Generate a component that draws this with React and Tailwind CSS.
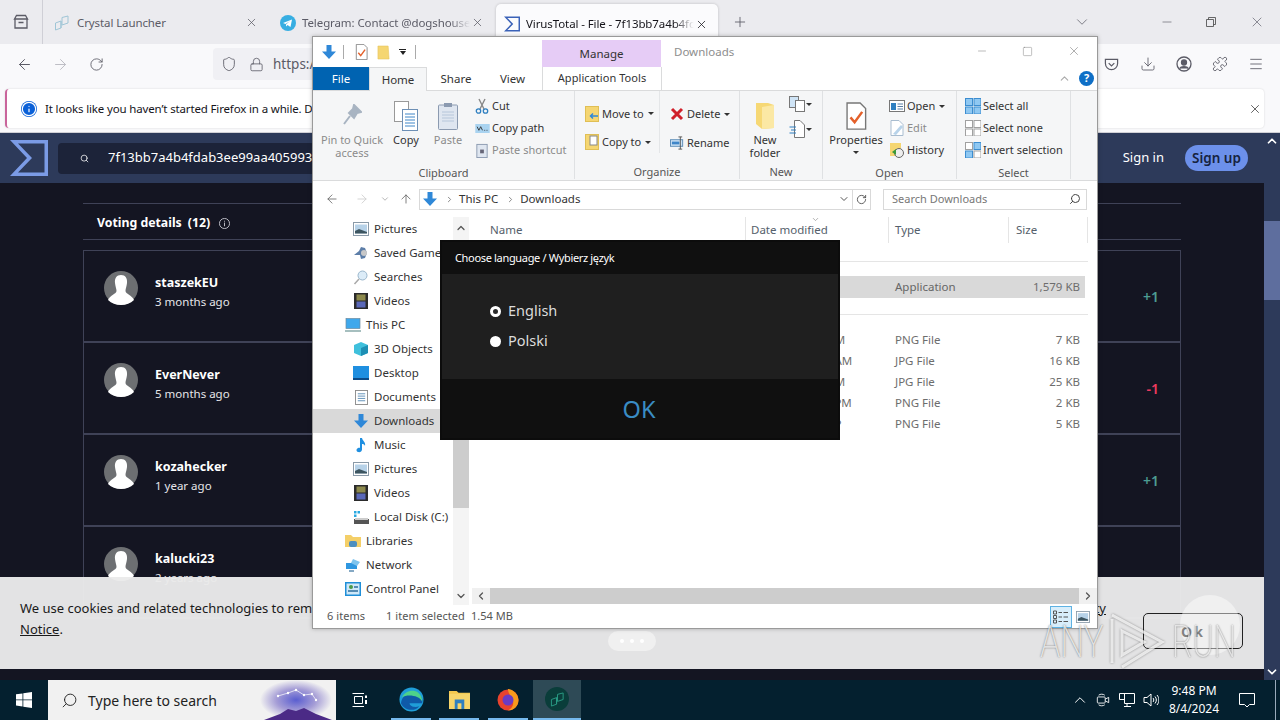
import React from "react";
import { X, Plus, ChevronDown, ChevronUp, ChevronLeft, ChevronRight, Minus, Square, ArrowLeft, ArrowRight, ArrowUp, RotateCw, Shield, Lock, Download, Puzzle, Menu, Search, Info } from "lucide-react";

const Sigma = ({ className, color = "#7b9be6" }) => (
  <svg viewBox="0 0 38 36" className={className}>
    <path fillRule="evenodd" fill={color} d="M0 0H38V36H0L17 18ZM8 3.500L22 18L8 32.500H34.500V3.500Z" />
  </svg>
);

const Crystal = ({ className, c = "#9fc5d6" }) => (
  <svg viewBox="0 0 16 16" className={className} fill="none" stroke={c} strokeWidth="1">
    <path d="M1.500 8L7 6V13L1.500 15ZM7 6V13M8 2.500L14 1V8L8 10Z" />
  </svg>
);

const DownArrow = ({ className }) => (
  <svg viewBox="0 0 16 16" className={className}><path d="M5.500 1H10.500V7.500H15L8 15L1 7.500H5.500Z" fill="#2f88d8" /></svg>
);
const Doc = ({ className, check }) => (
  <svg viewBox="0 0 16 20" className={className} fill="none">
    <path d="M1.500 .5H11L15 4.500V19.500H1.500Z" fill="#fff" stroke="#777" />
    {check && <path d="M4 11L7 14.500L12.500 7" stroke="#e4602a" strokeWidth="1.800" />}
  </svg>
);
const Pic = ({ className }) => (
  <svg viewBox="0 0 16 14" className={className}>
    <rect x=".5" y=".5" width="15" height="13" fill="#fff" stroke="#8a9aa8" />
    <rect x="2" y="2.500" width="12" height="9" fill="#b7d2e8" />
    <path d="M2 9L6 7L14 10V11.500H2Z" fill="#3d5560" />
  </svg>
);
const Vid = ({ className }) => (
  <svg viewBox="0 0 14 16" className={className}>
    <rect width="14" height="16" fill="#2b2b2b" />
    <rect x="2.500" y="1.500" width="9" height="6" fill="#8d8a4d" />
    <rect x="2.500" y="8.500" width="9" height="6" fill="#5a68b8" />
  </svg>
);

const SmallBtn = ({ icon, label, gray, caret, cls = "" }) => (
  <div className={`flex items-center h-[22px] ${cls}`}>
    <span className="w-[18px] h-[16px] flex items-center justify-center shrink-0">{icon}</span>
    <span className={`ml-[1px] whitespace-nowrap ${gray ? "text-[#8b8b8b]" : "text-[#333]"}`}>{label}</span>
    {caret && <span className="ml-[4px] w-0 h-0 border-x-[3px] border-x-transparent border-t-[3px] border-t-[#333]" />}
  </div>
);

const BigBtn = ({ icon, lines, gray, w, caret }) => (
  <div className={`flex flex-col items-center shrink-0 ${w}`}>
    <div className="h-[34px] mt-[8px] flex items-center justify-center">{icon}</div>
    <div className={`leading-[13px] text-center whitespace-nowrap ${gray ? "text-[#8b8b8b]" : "text-[#333]"}`}>
      {lines.map((l) => (<div key={l}>{l}</div>))}
      {caret && <div className="mx-auto mt-[5px] w-0 h-0 border-x-[3px] border-x-transparent border-t-[3px] border-t-[#333]" />}
    </div>
  </div>
);

const Group = ({ w, label, children }) => (
  <div className={`${w} shrink-0 flex flex-col border-r border-[#dfe1e3] h-[88px]`}>
    <div className="h-[70px] flex">{children}</div>
    <div className="text-center text-[#555] leading-[14px] mt-[5px]">{label}</div>
  </div>
);

const SelIcon = ({ fill }) => (
  <svg viewBox="0 0 16 16" className="w-[16px] h-[16px]">
    {[[0, 0], [8.500, 0], [0, 8.500], [8.500, 8.500]].map(([x, y], i) => (
      <rect key={i} x={x + .5} y={y + .5} width="7" height="7" fill={fill[i] ? "#8fc8f2" : "#fff"} stroke={fill[i] ? "#3c8dd0" : "#a0a0a0"} />
    ))}
  </svg>
);

const navRows = [
  ["Pictures", <Pic className="w-[16px] h-[14px]" />, 1],
  ["Saved Game", <svg viewBox="0 0 16 16" className="w-[16px] h-[16px]"><path d="M1 10L6 6L8 2L12 3L14 8L12 13L8 14L7 10Z" fill="#5d7ea8" /><circle cx="11" cy="8" r="3" fill="#c8c8c8" /></svg>, 1],
  ["Searches", <svg viewBox="0 0 16 16" className="w-[16px] h-[16px]" fill="none"><circle cx="9.500" cy="6.500" r="4.500" fill="#dcecf8" stroke="#9ab6cc" /><path d="M6 10L1.500 15" stroke="#a8a8a8" strokeWidth="1.500" /></svg>, 1],
  ["Videos", <Vid className="w-[14px] h-[16px]" />, 1],
  ["This PC", <svg viewBox="0 0 16 16" className="w-[16px] h-[16px]"><rect x="1" y="1.500" width="14" height="10" fill="#3fa8ec" stroke="#6b8aa0" strokeWidth=".7" /><path d="M0 14H16" stroke="#8aa" strokeWidth="1.500" /></svg>, 0],
  ["3D Objects", <svg viewBox="0 0 16 16" className="w-[16px] h-[16px]"><path d="M8 1L15 4V12L8 15L1 12V4Z" fill="#3fc0dc" /><path d="M8 7L15 4V12L8 15Z" fill="#1d8fb4" /></svg>, 1],
  ["Desktop", <svg viewBox="0 0 16 14" className="w-[16px] h-[14px]"><rect width="16" height="14" fill="#1f8fe0" /><rect y="12" width="16" height="2" fill="#0c4a86" /></svg>, 1],
  ["Documents", <svg viewBox="0 0 14 16" className="w-[13px] h-[15px]"><rect x=".5" y=".5" width="13" height="15" fill="#fff" stroke="#8a8a8a" /><path d="M3 4H11M3 6.500H11M3 9H11M3 11.500H11" stroke="#5b8db5" /></svg>, 1],
  ["Downloads", <DownArrow className="w-[16px] h-[16px]" />, 1, true],
  ["Music", <svg viewBox="0 0 16 16" className="w-[16px] h-[16px]"><path d="M7 1H9C9.500 4 13 5 12 9C11.500 7.500 10.500 7 9 7V12.500C9 14.500 7 15.500 5 15C3 14.500 3 12 5 11C6 10.500 7 10.700 7 11Z" fill="#1f8fe0" /></svg>, 1],
  ["Pictures", <Pic className="w-[16px] h-[14px]" />, 1],
  ["Videos", <Vid className="w-[14px] h-[16px]" />, 1],
  ["Local Disk (C:)", <svg viewBox="0 0 16 16" className="w-[16px] h-[16px]"><rect x="1" y="2" width="2.500" height="2.500" fill="#29a8e0" /><rect x="4.500" y="2" width="2.500" height="2.500" fill="#29a8e0" /><rect x="1" y="5.500" width="2.500" height="2.500" fill="#29a8e0" /><rect x="1" y="10" width="15" height="5" fill="#555" /><rect x="2" y="9" width="13" height="2" fill="#ccc" /></svg>, 1],
  ["Libraries", <svg viewBox="0 0 16 16" className="w-[16px] h-[16px]"><path d="M0 2H6L8 4H16V14H0Z" fill="#f4cf68" /><rect x="4" y="8" width="8" height="6" rx="2" fill="#4d8fc0" /></svg>, 0],
  ["Network", <svg viewBox="0 0 16 16" className="w-[16px] h-[16px]"><path d="M1 6H12V12H1Z" fill="#2f97e0" /><path d="M8 2L15 5L12 9L6 6Z" fill="#7ec4ee" /><path d="M4 14H9" stroke="#5c8db0" strokeWidth="1.500" /></svg>, 0],
  ["Control Panel", <svg viewBox="0 0 16 14" className="w-[16px] h-[14px]"><rect width="16" height="14" fill="#1f8fd8" /><rect x="1.500" y="1.500" width="13" height="11" fill="#cfe8f8" /><circle cx="6" cy="5" r="2" fill="#4a9a4a" /><path d="M9 5H13M3 9H13" stroke="#2e6d9c" strokeWidth="1.300" /></svg>, 0],
];

const files = [
  ["8/1/2024 4:10 PM", "PNG File", "7 KB"],
  ["7/3/2024 11:16 AM", "JPG File", "16 KB"],
  ["7/3/2024 1:22 PM", "JPG File", "25 KB"],
  ["7/3/2024 12:47 PM", "PNG File", "2 KB"],
  ["7/3/2024 12:14 P", "PNG File", "5 KB"],
];

const voters = [
  ["staszekEU", "3 months ago", "+1", "text-[#4d9d92]"],
  ["EverNever", "5 months ago", "-1", "text-[#ee3a5e]"],
  ["kozahecker", "1 year ago", "+1", "text-[#4d9d92]"],
  ["kalucki23", "2 years ago", "", ""],
];

const Avatar = () => (
  <svg viewBox="0 0 34 34" className="w-[34px] h-[34px] shrink-0">
    <circle cx="17" cy="17" r="17" fill="#6d6f72" />
    <path d="M17 4C21.500 4 23.500 7.500 23 12C22.700 15 21.500 18 21.500 20C21.500 23 28 24 30 29C26.500 32.500 22 34 17 34C12 34 7.500 32.500 4 29C6 24 12.500 23 12.500 20C12.500 18 11.300 15 11 12C10.500 7.500 12.500 4 17 4Z" fill="#fff" />
  </svg>
);

function Tabs() {
  return (
    <div className="h-[44px] bg-[#ebebef] flex items-center text-[11.500px] tracking-[-0.1px] text-[#5b5b66] shrink-0">
      <div className="w-[43px] h-full flex items-center justify-center border-r border-[#cfcfd6] shrink-0">
        <svg viewBox="0 0 16 16" className="w-[16px] h-[16px]" fill="none" stroke="#5b5b66" strokeWidth="1.300">
          <path d="M2 5V14H14V5M1.500 5L3.500 1.500H12.500L14.500 5ZM5.500 8.500H10.500" />
        </svg>
      </div>
      <div className="w-[222px] flex items-center pl-[11px] pr-[7px] pt-[1px] shrink-0">
        <Crystal className="w-[16px] h-[16px] shrink-0" />
        <span className="ml-[7px] flex-1 whitespace-nowrap">Crystal Launcher</span>
        <X size={13} strokeWidth={1.400} />
      </div>
      <div className="w-[231px] flex items-center pl-[15px] pr-[12px] pt-[1px] shrink-0">
        <svg viewBox="0 0 16 16" className="w-[16px] h-[16px] shrink-0"><circle cx="8" cy="8" r="8" fill="#37aee2" /><path d="M3 8L12 4.500L10.500 12L7.500 10L6 11.500L6 9.500L10 6L5.500 9Z" fill="#fff" /></svg>
        <span className="ml-[6px] w-[168px] overflow-hidden whitespace-nowrap [mask-image:linear-gradient(to_right,black_88%,transparent)]">Telegram: Contact @dogshouse_bot</span>
        <X size={13} strokeWidth={1.400} className="ml-[1px]" />
      </div>
      <div className="w-[222px] h-[40px] mt-[4px] bg-[#fbfbfd] rounded-t-[5px] shadow-[0_0_3px_rgba(0,0,0,0.2)] flex items-center pl-[8px] pr-[9px] shrink-0 text-[#15141a]">
        <Sigma className="w-[16px] h-[16px] shrink-0" color="#3b62b8" />
        <span className="ml-[6px] w-[168px] overflow-hidden whitespace-nowrap [mask-image:linear-gradient(to_right,black_88%,transparent)]">VirusTotal - File - 7f13bb7a4b4fdab3ee99</span>
        <X size={13} strokeWidth={1.400} className="ml-[1px]" />
      </div>
      <Plus size={16} strokeWidth={1.300} className="ml-[14px] shrink-0" />
      <div className="flex-1" />
      <ChevronDown size={18} strokeWidth={1} className="mr-[69px]" />
      <Minus size={14} strokeWidth={1.100} className="mr-[32px]" />
      <svg viewBox="0 0 10 10" className="w-[10px] h-[10px] mr-[33px]" fill="none" stroke="#444" strokeWidth=".8"><path d="M.5 2.500H7.500V9.500H.5ZM2.500 2.500V.5H9.500V7.500H7.500" /></svg>
      <X size={16} strokeWidth={1} className="mr-[15px]" />
    </div>
  );
}

function NavBar() {
  return (
    <div className="h-[45px] bg-[#f9f9fb] flex items-center pb-[5px] shrink-0 text-[#5b5b66]">
      <ArrowLeft size={17} strokeWidth={1.400} className="ml-[16px]" />
      <ArrowRight size={17} strokeWidth={1.400} className="ml-[19px] text-[#bdbdc4]" />
      <RotateCw size={15} strokeWidth={1.400} className="ml-[20px]" />
      <div className="ml-[109px] h-[32px] w-[880px] bg-[#f0f0f4] rounded-[4px] flex items-center pl-[8px] text-[13.500px]">
        <Shield size={16} strokeWidth={1.300} />
        <Lock size={15} strokeWidth={1.300} className="ml-[12px]" />
        <span className="ml-[9px]">https://</span>
      </div>
      <div className="flex-1" />
      <svg viewBox="0 0 16 16" className="w-[15px] h-[15px] mr-[21px]" fill="none" stroke="#5b5b66" strokeWidth="1.300"><path d="M1.500 2.500H14.500V7A6.500 6.500 0 0 1 1.500 7ZM5 6.500L8 9.500L11 6.500" /></svg>
      <Download size={16} strokeWidth={1.300} className="mr-[20px]" />
      <svg viewBox="0 0 16 16" className="w-[16px] h-[16px] mr-[20px]" fill="none" stroke="#5b5b66" strokeWidth="1.300"><circle cx="8" cy="8" r="7" /><circle cx="8" cy="6.500" r="2.500" fill="#5b5b66" /><path d="M3.500 12.500C5 10 11 10 12.500 12.500" fill="#5b5b66" /></svg>
      <Puzzle size={16} strokeWidth={1.300} className="mr-[20px]" />
      <Menu size={16} strokeWidth={1.300} className="mr-[16px]" />
    </div>
  );
}

function InfoBar() {
  return (
    <div className="h-[44px] bg-[#f9f9fb] shrink-0 pl-[5px] pr-[16px] border-b border-[#d0d0d6]">
      <div className="h-[39px] bg-white rounded-[4px] shadow-[0_0_2px_rgba(0,0,0,0.15)] border-l-[2px] border-[#c9649b] flex items-center pl-[14px] pr-[1px] pt-[1px] text-[11.500px] tracking-[-0.15px] text-[#15141a]">
        <span className="w-[16px] h-[16px] rounded-full bg-[#0a60d8] text-white flex items-center justify-center shrink-0">
          <Info size={16} strokeWidth={1.800} color="#fff" />
        </span>
        <span className="ml-[8px] flex-1 whitespace-nowrap">It looks like you haven’t started Firefox in a while. Do you want to clean it up for a fresh</span>
        <X size={14} strokeWidth={1.300} className="text-[#333] mr-[1px]" />
      </div>
    </div>
  );
}

function VtHeader() {
  return (
    <div className="h-[50px] bg-[#2d3a5a] flex items-center shrink-0 text-white">
      <Sigma className="w-[38px] h-[36px] ml-[10px] shrink-0" />
      <div className="ml-[10px] w-[520px] h-[31px] bg-[#1c2339] rounded-[4px] flex items-center pl-[22px] text-[13px] overflow-hidden whitespace-nowrap">
        <Search size={9} strokeWidth={2} className="shrink-0" />
        <span className="ml-[19px]">7f13bb7a4b4fdab3ee99aa40599314a91b1c8e3d2a</span>
      </div>
      <div className="flex-1" />
      <span className="text-[13px] mr-[21px]">Sign in</span>
      <span className="mr-[32px] w-[63px] h-[26px] rounded-full bg-[#6c90ea] text-[#16233f] font-semibold text-[13.500px] flex items-center justify-center">Sign up</span>
    </div>
  );
}

function Voting() {
  return (
    <div className="bg-[#141522] flex-1 overflow-hidden pl-[83px] pr-[83px] pt-[20px] text-white">
      <div className="w-[1098px] h-[37px] border-y border-[#3f4257] flex items-center pl-[14px] pt-[3px] text-[12.300px] font-bold">
        Voting details <span className="ml-[6px]">(12)</span>
        <svg viewBox="0 0 12 12" className="w-[11px] h-[11px] ml-[9px]" fill="none" stroke="#c8c8d0"><circle cx="6" cy="6" r="5.500" /><path d="M6 5V9M6 3V4" /></svg>
      </div>
      <div className="w-[1098px] mt-[10px] border-t border-x border-[#3f4257]">
        {voters.map(([n, t, v, c]) => (
          <div key={n} className="h-[92px] border-b-2 border-[#3f4257] flex pl-[20px] pr-[21px] pt-[20px]">
            <Avatar />
            <div className="ml-[17px] mt-[2px]">
              <div className="text-[12.500px] font-bold leading-[20px]">{n}</div>
              <div className="text-[11.500px] leading-[18px] text-[#e6e6ea]">{t}</div>
            </div>
            <div className={`ml-auto mt-[15px] text-[14px] font-semibold ${c}`}>{v}</div>
          </div>
        ))}
      </div>
    </div>
  );
}

function Cookie() {
  return (
    <div className="absolute left-0 top-[577px] w-[1264px] h-[92px] bg-[#eaeaea]/[0.97] pl-[20px] pt-[21px] text-[13px] text-[#1a1a1a] leading-[21px]">
      <div className="w-[1086px] flex justify-between whitespace-nowrap">
        <span>We use cookies and related technologies to remember your preferences. See our</span>
        <span className="underline">Privacy</span>
      </div>
      <div><span className="underline">Notice</span>.</div>
      <div className="absolute left-[1143px] top-[36px] w-[100px] h-[36px] rounded-[5px] border border-[#222] flex items-center justify-center text-[14px] font-bold tracking-[2px]">Ok</div>
      <div className="absolute left-[608px] top-[54px] w-[48px] h-[20px] rounded-full bg-[#f0f0f0] flex items-center justify-center gap-[6px]">
        <i className="w-[4px] h-[4px] rounded-full bg-white" /><i className="w-[4px] h-[4px] rounded-full bg-white" /><i className="w-[4px] h-[4px] rounded-full bg-white" />
      </div>
    </div>
  );
}

function Explorer() {
  return (
    <div className="absolute left-[312px] top-[36px] w-[786px] h-[593px] bg-white border border-[#9a9a9a] flex flex-col text-[11.500px] text-[#333] shadow-[0_0_4px_rgba(0,0,0,0.25)]">
      {/* title row */}
      <div className="h-[30px] flex items-end shrink-0">
        <div className="w-[229px] h-[30px] flex items-center pl-[8px] shrink-0">
          <DownArrow className="w-[16px] h-[16px]" />
          <i className="ml-[6px] w-px h-[14px] bg-[#aaa]" />
          <Doc check className="ml-[11px] w-[13px] h-[16px]" />
          <svg viewBox="0 0 14 16" className="ml-[9px] w-[13px] h-[15px]"><path d="M1 1H12L13 15H1Z" fill="#f5d672" stroke="#e6c45c" strokeWidth=".6" /></svg>
          <span className="ml-[9px] flex flex-col items-center gap-[1px]">
            <i className="w-[7px] h-px bg-[#222]" />
            <i className="w-0 h-0 border-x-[3.500px] border-x-transparent border-t-[4px] border-t-[#222]" />
          </span>
          <i className="ml-[9px] w-px h-[14px] bg-[#aaa]" />
        </div>
        <div className="w-[119px] h-[27px] bg-[#e6ccf6] flex items-center justify-center shrink-0">Manage</div>
        <span className="ml-[13px] self-center text-[#8e8e8e]">Downloads</span>
        <div className="flex-1" />
        <div className="self-center flex items-center text-[#777] pr-[16px] -mt-[2px]">
          <Minus size={12} strokeWidth={1} className="mr-[34px]" />
          <Square size={11} strokeWidth={1} className="mr-[34px]" />
          <X size={14} strokeWidth={1} />
        </div>
      </div>
      {/* tabs row */}
      <div className="h-[24px] flex items-stretch border-b border-[#dadbdc] shrink-0">
        <div className="w-[56px] bg-[#0063b1] text-white flex items-center justify-center">File</div>
        <div className="w-[58px] -mb-px bg-[#f5f6f7] border-x border-t border-[#dadbdc] flex items-center justify-center">Home</div>
        <div className="w-[58px] flex items-center justify-center">Share</div>
        <div className="w-[55px] flex items-center justify-center">View</div>
        <div className="w-[120px] ml-[2px] border-x border-[#dadbdc] flex items-center justify-center whitespace-nowrap text-[11px] tracking-[0.05px]">Application Tools</div>
        <div className="flex-1" />
        <div className="flex items-center pr-[3px]">
          <ChevronUp size={13} className="text-[#aaa] mr-[8px]" />
          <span className="w-[15px] h-[15px] rounded-full bg-[#0f6fc6] text-white text-[11px] font-bold flex items-center justify-center">?</span>
        </div>
      </div>
      {/* ribbon */}
      <div className="h-[90px] bg-[#f5f6f7] border-b border-[#dadbdc] flex shrink-0 text-[11px]">
        <Group w="w-[262px]" label="Clipboard">
          <BigBtn w="w-[70px] ml-[4px]" gray lines={["Pin to Quick", "access"]} icon={<svg viewBox="0 0 20 24" className="w-[20px] h-[24px]"><path d="M12 1L19 8L15 9L12 14L7 9L11 5Z M8 12L2 20" fill="#a8b4c2" stroke="#a8b4c2" strokeWidth="2" /></svg>} />
          <BigBtn w="w-[38px]" lines={["Copy"]} icon={<svg viewBox="0 0 24 30" className="w-[24px] h-[30px]"><rect x=".5" y=".5" width="14" height="20" fill="#fff" stroke="#999" /><rect x="8.500" y="8.500" width="15" height="21" fill="#fff" stroke="#6d8fb5" /><path d="M11 13H21M11 16H21M11 19H21M11 22H21M11 25H21" stroke="#3f86c8" /></svg>} />
          <BigBtn w="w-[46px]" gray lines={["Paste"]} icon={<svg viewBox="0 0 20 28" className="w-[20px] h-[28px]"><rect x=".5" y="3" width="19" height="24.500" rx="1" fill="#dfe6f0" stroke="#8b9ab0" /><rect x="6" y="1" width="8" height="4" fill="#8b9ab0" /><path d="M4 10H16M4 13H16M4 16H16M4 19H16" stroke="#b6c6da" /></svg>} />
          <div className="ml-[2px] pt-[4px] flex flex-col">
            <SmallBtn label="Cut" icon={<svg viewBox="0 0 14 16" className="w-[14px] h-[16px]" fill="none"><path d="M4 1L9 11M10 1L5 11" stroke="#888" strokeWidth="1.400" /><circle cx="3.500" cy="13" r="2.200" stroke="#2f7fc0" strokeWidth="1.300" /><circle cx="10.500" cy="13" r="2.200" stroke="#2f7fc0" strokeWidth="1.300" /></svg>} />
            <SmallBtn label="Copy path" icon={<svg viewBox="0 0 16 10" className="w-[15px] h-[9px]"><rect width="16" height="10" fill="#a9d3f0" /><path d="M2 3L4 7L6 3L8 7M10 7H11M12.500 7H13.500" stroke="#333" fill="none" /></svg>} />
            <SmallBtn gray label="Paste shortcut" icon={<svg viewBox="0 0 12 16" className="w-[12px] h-[15px]"><rect x=".5" y="1.500" width="11" height="14" fill="#dfe6f0" stroke="#8b9ab0" /><path d="M4 7H8V11H4Z" fill="#667" /></svg>} />
          </div>
        </Group>
        <Group w="w-[165px]" label="Organize">
          <div className="pl-[8px] pt-[12px] flex flex-col gap-[7px] w-[85px] border-r border-[#e4e6e8] h-[62px]">
            <SmallBtn caret label="Move to" icon={<svg viewBox="0 0 14 16" className="w-[14px] h-[16px]"><rect x=".5" y=".5" width="13" height="15" fill="#f5d672" stroke="#e0bf55" /><path d="M13 10H6M8 7.500L5.500 10L8 12.500" stroke="#2f88d8" strokeWidth="1.500" fill="none" /></svg>} />
            <SmallBtn caret label="Copy to" icon={<svg viewBox="0 0 14 16" className="w-[14px] h-[16px]"><rect x=".5" y=".5" width="13" height="15" fill="#f5d672" stroke="#e0bf55" /><rect x="5" y="2" width="7" height="9" fill="#fff" stroke="#888" /></svg>} />
          </div>
          <div className="pl-[8px] pt-[12px] flex flex-col gap-[7px]">
            <SmallBtn caret label="Delete" icon={<svg viewBox="0 0 14 14" className="w-[14px] h-[14px]"><path d="M2 2L12 12M12 2L2 12" stroke="#d0202a" strokeWidth="3" /></svg>} />
            <SmallBtn label="Rename" icon={<svg viewBox="0 0 16 14" className="w-[15px] h-[14px]" fill="none"><rect x=".5" y="3.500" width="13" height="7" fill="#cfe4f6" stroke="#5a8ab5" /><rect x="2" y="5.500" width="8" height="3" fill="#3f86c8" /><path d="M11 .5V13.500M9 .5H13M9 13.500H13" stroke="#555" /></svg>} />
          </div>
        </Group>
        <Group w="w-[83px]" label="New">
          <BigBtn w="w-[50px]" lines={["New", "folder"]} icon={<svg viewBox="0 0 22 28" className="w-[22px] h-[28px]"><path d="M2 1H14L20 3V26L8 27L2 22Z" fill="#f6d875" /><path d="M8 5L20 3V26L8 27Z" fill="#fbe8a4" /></svg>} />
          <div className="pt-[2px] flex flex-col gap-[3px] ml-[-1px]">
            <div className="h-[22px] flex items-center"><svg viewBox="0 0 16 16" className="w-[16px] h-[16px]"><rect x=".5" y=".5" width="9" height="11" fill="#cfe4f6" stroke="#777" /><rect x="6.500" y="4.500" width="9" height="11" fill="#fff" stroke="#777" /></svg><i className="ml-[1px] w-0 h-0 border-x-[3px] border-x-transparent border-t-[3px] border-t-[#333]" /></div>
            <div className="h-[22px] flex items-center"><svg viewBox="0 0 16 18" className="w-[16px] h-[18px]" fill="none"><path d="M5.500 .5H11L15.500 5V17.500H5.500Z" fill="#fff" stroke="#777" /><path d="M.5 7H7M2 10H7M.5 13H7" stroke="#2f7fc0" /></svg><i className="ml-[1px] w-0 h-0 border-x-[3px] border-x-transparent border-t-[3px] border-t-[#333]" /></div>
          </div>
        </Group>
        <Group w="w-[134px]" label="Open">
          <BigBtn w="w-[64px] ml-[1px]" caret lines={["Properties"]} icon={<Doc check className="w-[22px] h-[28px]" />} />
          <div className="pt-[4px] flex flex-col">
            <SmallBtn caret label="Open" icon={<svg viewBox="0 0 16 12" className="w-[16px] h-[12px]"><rect x=".5" y=".5" width="15" height="11" fill="#fff" stroke="#777" /><rect x="2" y="3" width="5" height="7" fill="#2f7fc0" /><path d="M8.500 4H14M8.500 6.500H14M8.500 9H14" stroke="#5a7fa5" /></svg>} />
            <SmallBtn gray label="Edit" icon={<svg viewBox="0 0 14 16" className="w-[14px] h-[16px]"><path d="M1 .5H9L13 4.500V15.500H1Z" fill="#fff" stroke="#a9bdd0" /><path d="M3 14L11 5L13 7L6 15Z" fill="#b8d3ea" /></svg>} />
            <SmallBtn label="History" icon={<svg viewBox="0 0 16 16" className="w-[16px] h-[16px]"><rect x="1" y="1" width="11" height="13" fill="#f5d672" /><circle cx="10" cy="11" r="4.500" fill="#eee" stroke="#666" /><path d="M3 10L7 7V13Z" fill="#3a9a3a" /></svg>} />
          </div>
        </Group>
        <Group w="w-[114px]" label="Select">
          <div className="pl-[7px] pt-[4px] flex flex-col">
            <SmallBtn label="Select all" icon={<SelIcon fill={[1, 1, 1, 1]} />} />
            <SmallBtn label="Select none" icon={<SelIcon fill={[0, 0, 0, 0]} />} />
            <SmallBtn label="Invert selection" icon={<SelIcon fill={[0, 1, 1, 0]} />} />
          </div>
        </Group>
      </div>
      {/* address row */}
      <div className="h-[36px] flex items-center shrink-0 text-[#333]">
        <ArrowLeft size={14} strokeWidth={1.400} className="ml-[12px] text-[#666]" />
        <ArrowRight size={14} strokeWidth={1.400} className="ml-[16px] text-[#ccc]" />
        <ChevronDown size={10} strokeWidth={1.500} className="ml-[11px] text-[#888]" />
        <ArrowUp size={14} strokeWidth={1.400} className="ml-[9px] text-[#666]" />
        <div className="ml-[6px] w-[452px] h-[21px] border border-[#d9d9d9] flex items-center pl-[2px]">
          <DownArrow className="w-[16px] h-[16px]" />
          <ChevronRight size={9} className="ml-[7px] text-[#666]" />
          <span className="ml-[5px]">This PC</span>
          <ChevronRight size={9} className="ml-[8px] text-[#666]" />
          <span className="ml-[5px]">Downloads</span>
          <div className="flex-1" />
          <ChevronDown size={12} className="text-[#555] mr-[2px]" />
          <div className="w-px h-full bg-[#d9d9d9]" />
          <RotateCw size={11} className="ml-[3px] mr-[3px] text-[#555]" />
        </div>
        <div className="ml-[12px] w-[204px] h-[21px] border border-[#d9d9d9] flex items-center pl-[8px] text-[11px] text-[#777]">
          <span className="flex-1">Search Downloads</span>
          <Search size={12} className="mr-[5px] text-[#444] -scale-x-100" />
        </div>
      </div>
      {/* main */}
      <div className="flex-1 flex min-h-0">
        <div className="w-[140px] shrink-0 overflow-hidden">
          {navRows.map(([label, icon, sub, sel], i) => (
            <div key={i} className={`h-[24px] flex items-center whitespace-nowrap overflow-hidden ${sel ? "bg-[#d9d9d9]" : ""} ${sub ? "pl-[40px]" : "pl-[32px]"}`}>
              <span className="w-[16px] flex justify-center shrink-0">{icon}</span>
              <span className="ml-[5px]">{label}</span>
            </div>
          ))}
        </div>
        <div className="w-[16px] bg-[#f4f4f4] shrink-0 flex flex-col items-center">
          <ChevronUp size={12} strokeWidth={2.500} className="mt-[5px] text-[#555]" />
          <div className="w-full h-[249px] mt-[25px] bg-[#cdcdcd]" />
          <div className="flex-1" />
          <ChevronDown size={12} strokeWidth={2.500} className="mb-[3px] text-[#555]" />
        </div>
        <div className="flex-1 flex flex-col text-[#6d6d6d] min-w-0">
          <div className="h-[26px] flex items-center text-[#55606b] shrink-0 relative">
            <div className="w-[276px] pl-[21px]">Name</div>
            <div className="w-[143px] pl-[5px] border-l border-[#e5e5e5] h-full flex items-center relative">
              Date modified
              <ChevronDown size={9} className="absolute left-[65px] top-[-2px] text-[#999]" />
            </div>
            <div className="w-[120px] pl-[6px] border-l border-[#e5e5e5] h-full flex items-center">Type</div>
            <div className="w-[80px] pl-[7px] border-x border-[#e5e5e5] h-full flex items-center">Size</div>
          </div>
          <div className="h-px w-[619px] bg-[#e5e5e5] mt-[18px] shrink-0" />
          <div className="h-[22px] w-[616px] mt-[14px] bg-[#d9d9d9] flex items-center shrink-0">
            <div className="w-[276px]" />
            <div className="w-[143px] pl-[6px] whitespace-nowrap">8/4/2024 9:40 P</div>
            <div className="w-[120px] pl-[7px] text-[#666]">Application</div>
            <div className="flex-1 text-right pr-[5px]">1,579 KB</div>
          </div>
          <div className="h-px w-[619px] bg-[#e5e5e5] mt-[16px] shrink-0" />
          <div className="mt-[14px] shrink-0">
            {files.map(([d, t, s]) => (
              <div key={d} className="h-[21px] w-[616px] flex items-center">
                <div className="w-[276px]" />
                <div className="w-[143px] pl-[6px] whitespace-nowrap">{d}</div>
                <div className="w-[120px] pl-[7px]">{t}</div>
                <div className="flex-1 text-right pr-[5px]">{s}</div>
              </div>
            ))}
          </div>
          <div className="flex-1" />
          <div className="h-[16px] mb-[1px] ml-[3px] flex items-center bg-[#f0f0f0] shrink-0">
            <ChevronLeft size={12} strokeWidth={2.500} className="ml-[3px] text-[#555]" />
            <div className="ml-[3px] flex-1 h-full bg-[#cdcdcd]" />
            <ChevronRight size={12} strokeWidth={2.500} className="mx-[3px] text-[#555]" />
          </div>
        </div>
      </div>
      {/* status */}
      <div className="h-[23px] flex items-center pl-[14px] shrink-0 text-[#555] text-[11px] tracking-[0.05px]">
        <span>6 items</span>
        <span className="ml-[21px]">1 item selected</span>
        <span className="ml-[6px]">1.54 MB</span>
        <div className="flex-1" />
        <span className="w-[22px] h-[22px] bg-[#d8eefb] border border-[#5eb2e3] flex items-center justify-center">
          <svg viewBox="0 0 16 14" className="w-[16px] h-[14px]" fill="none" stroke="#555"><path d="M.5 1H3.500V4H.5ZM.5 5.500H3.500V8.500H.5ZM.5 10H3.500V13H.5ZM5.500 2.500H9M10.500 2.500H15M5.500 7H9M10.500 7H15M5.500 11.500H9M10.500 11.500H15" /></svg>
        </span>
        <Pic className="ml-[4px] mr-[7px] w-[14px] h-[12px]" />
      </div>
    </div>
  );
}

function LangDialog() {
  return (
    <div className="absolute left-[440px] top-[240px] w-[400px] h-[200px] bg-[#101010] border-[2px] border-[#0c0c0c] flex flex-col">
      <div className="h-[32px] flex items-center pl-[13px] text-[11px] tracking-[-0.33px] text-white shrink-0">Choose language / Wybierz język</div>
      <div className="h-[105px] bg-[#1f1f1f] pl-[48px] pt-[22px] text-[14.500px] text-[#dcdcdc] shrink-0">
        <div className="h-[30px] flex items-center">
          <span className="w-[11px] h-[11px] rounded-full bg-[#2a2a2a] border-[3px] border-white" />
          <span className="ml-[7px]">English</span>
        </div>
        <div className="h-[30px] flex items-center">
          <span className="w-[11px] h-[11px] rounded-full bg-white" />
          <span className="ml-[7px]">Polski</span>
        </div>
      </div>
      <div className="flex-1 flex items-center justify-center text-[23.500px] text-[#3a8cc4] pt-[3px] pr-[2px]">OK</div>
    </div>
  );
}

function Taskbar() {
  return (
    <div className="h-[40px] bg-[#04202f] flex items-stretch shrink-0 text-white relative">
      <div className="w-[48px] flex items-center justify-center shrink-0">
        <svg viewBox="0 0 16 16" className="w-[16px] h-[16px]" fill="#fff"><path d="M0 2.300L6.500 1.400V7.500H0ZM7.300 1.300L16 0V7.500H7.300ZM0 8.300H6.500V14.500L0 13.600ZM7.300 8.300H16V16L7.300 14.700Z" /></svg>
      </div>
      <div className="w-[288px] bg-[#f1f1f1] flex items-center pl-[13px] text-[#222] text-[14px] shrink-0 overflow-hidden relative">
        <Search size={17} strokeWidth={1.300} className="-scale-x-100" />
        <span className="ml-[10px]">Type here to search</span>
        <svg viewBox="0 0 78 40" className="absolute right-0 top-0 w-[78px] h-[40px]">
          <defs><radialGradient id="glow"><stop offset="0" stopColor="#5a5ed0" /><stop offset=".55" stopColor="#a59dd6" /><stop offset="1" stopColor="#f1f1f1" /></radialGradient></defs>
          <ellipse cx="38" cy="20" rx="36" ry="20" fill="url(#glow)" />
          <path d="M6 40L22 34L30 29L38 31L46 28L58 34L74 40Z" fill="#4b2a86" />
          <path d="M20 16L30 13L38 10L46 15L54 14L58 20" stroke="#fff" strokeWidth=".7" fill="none" />
          <g fill="#fff"><circle cx="20" cy="16" r="1.200" /><circle cx="30" cy="13" r="1.200" /><circle cx="38" cy="10" r="1.200" /><circle cx="46" cy="15" r="1.200" /><circle cx="54" cy="14" r="1.200" /><circle cx="58" cy="20" r="1.200" /></g>
        </svg>
      </div>
      <div className="w-[48px] flex items-center justify-center shrink-0">
        <svg viewBox="0 0 16 16" className="w-[16px] h-[16px]" fill="none" stroke="#fff"><path d="M.5 1.500H12M2.500 4.500H10.500V11.500H2.500ZM.5 14.500H12" /><path d="M14 3.500V6M14 8V12" strokeWidth="2" /></svg>
      </div>
      <div className="w-[40px] flex items-center justify-center border-b-2 border-[#76b9ed] shrink-0 ml-[7px]">
        <svg viewBox="0 0 26 26" className="w-[25px] h-[25px]"><circle cx="13" cy="13" r="12.500" fill="#1f9ed8" /><path d="M2 17C3 8 12 4 19 7C24 9 25 14 24 17H11C11 20 16 22 21 20C18 25 6 26 2 17Z" fill="#0f5aa8" /><path d="M3 11C6 4 15 2 20 6C23 8.500 24.500 12 24 15C21 9 9 7 3 11Z" fill="#4ed28a" /></svg>
      </div>
      <div className="w-[40px] ml-[8px] flex items-center justify-center border-b-2 border-[#76b9ed] shrink-0">
        <svg viewBox="0 0 24 22" className="w-[23px] h-[21px]"><path d="M1 2H9L11 4H23V6H1Z" fill="#f4c84e" /><rect x="1" y="5" width="22" height="16" fill="#f7d56a" /><rect x="7" y="11" width="10" height="10" fill="#2f7fc0" /><rect x="10" y="15" width="4" height="6" fill="#f7d56a" /></svg>
      </div>
      <div className="w-[40px] ml-[9px] flex items-center justify-center border-b-2 border-[#76b9ed] shrink-0">
        <svg viewBox="0 0 24 24" className="w-[24px] h-[24px]"><circle cx="12" cy="13" r="10.500" fill="#e8432e" /><path d="M12 2C16 2 22 6 22.500 13C22.500 19 18 23.500 12 23.500C15 22 18 19 17 14C16 9.500 12 7 12 2Z" fill="#f89a1c" /><circle cx="12" cy="13" r="5.500" fill="#6b3bc4" /></svg>
      </div>
      <div className="w-[48px] ml-[5px] bg-[#2e4a56] flex items-center justify-center border-b-2 border-[#76b9ed] shrink-0">
        <span className="w-[24px] h-[24px] rounded-full bg-[#0a3d3a] flex items-center justify-center"><Crystal className="w-[15px] h-[15px]" c="#2a9d85" /></span>
      </div>
      <div className="flex-1" />
      <div className="flex items-center">
        <ChevronUp size={18} strokeWidth={1.300} className="mr-[7px]" />
        <svg viewBox="0 0 16 16" className="w-[14px] h-[16px] mr-[9px]" fill="none" stroke="#fff"><rect x="1.500" y="4.500" width="9" height="7" rx="1" /><path d="M10.500 7L14.500 5V11L10.500 9M3 2.500C5 1 8 1 10 2.500M3 13.500C5 15 8 15 10 13.500" /></svg>
        <svg viewBox="0 0 16 16" className="w-[16px] h-[16px] mr-[8px]" fill="none" stroke="#fff"><path d="M.5 1.500H15.500V11.500H5.500V1.500M.5 1.500V7.500H5M8 11.500V14.500M5 14.500H12" /></svg>
        <svg viewBox="0 0 16 16" className="w-[16px] h-[16px]" fill="none" stroke="#fff"><path d="M1 5.500H4L8 2V14L4 10.500H1ZM10 6C11 7 11 9 10 10M12 4.500C13.800 6.500 13.800 9.500 12 11.500M14 3C16.500 6 16.500 10 14 13" /></svg>
        <div className="w-[68px] ml-[1px] text-center text-[12px] leading-[18px]"><div>9:48 PM</div><div>8/4/2024</div></div>
        <svg viewBox="0 0 16 16" className="w-[16px] h-[16px] ml-[11px]" fill="none" stroke="#fff"><path d="M.5 1.500H15.500V12.500H10.500L8 15L5.500 12.500H.5Z" /></svg>
        <i className="ml-[20px] mr-[4px] w-px h-full bg-[#9ab]" />
      </div>
    </div>
  );
}

function Watermark() {
  return (
    <div className="absolute left-[1038px] top-[595px] w-[204px] h-[78px] pointer-events-none">
      <div className="absolute left-[142px] top-0 w-[60px] h-[60px] rounded-full bg-white/45" />
      <div className="absolute left-0 top-[16px] flex items-center text-[44px] font-extralight leading-[56px] text-white/75 [text-shadow:0_0_2px_rgba(0,0,0,0.55)] font-['Roboto',sans-serif]">
        <span className="w-[64px] inline-block origin-left translate-x-[2px] scale-x-[0.76] whitespace-nowrap">ANY</span>
        <svg viewBox="0 0 58 62" className="ml-[6px] w-[58px] h-[62px] drop-shadow-[0_0_1px_rgba(0,0,0,0.5)]" fill="none" stroke="#ffffff" strokeOpacity=".75" strokeWidth="3"><path d="M4 8V52M4 4L54 31L14 56" /><path d="M14 20L36 31L14 44Z" /></svg>
        <span className="ml-[6px] w-[62px] inline-block origin-left scale-x-[0.72] whitespace-nowrap">RUN</span>
      </div>
    </div>
  );
}

export default function App() {
  return (
    <div className="relative w-[1280px] h-[720px] overflow-hidden bg-[#141522] font-['Noto_Sans',sans-serif]">
      <div className="h-[680px] flex flex-col">
        <Tabs />
        <NavBar />
        <InfoBar />
        <VtHeader />
        <Voting />
      </div>
      <Cookie />
      <div className="absolute left-[1264px] top-[183px] w-[16px] h-[497px] bg-[#2d3a5a] flex flex-col items-center">
        <div className="h-[38px] w-full" />
        <div className="w-full h-[79px] bg-[#5e6e9e]" />
        <div className="flex-1" />
        <ChevronDown size={14} strokeWidth={3} className="mb-[1px] text-white" />
      </div>
      <ChevronUp size={14} strokeWidth={3} className="absolute left-[1265px] top-[134px] text-white" />
      <Explorer />
      <LangDialog />
      <Taskbar />
      <Watermark />
    </div>
  );
}
